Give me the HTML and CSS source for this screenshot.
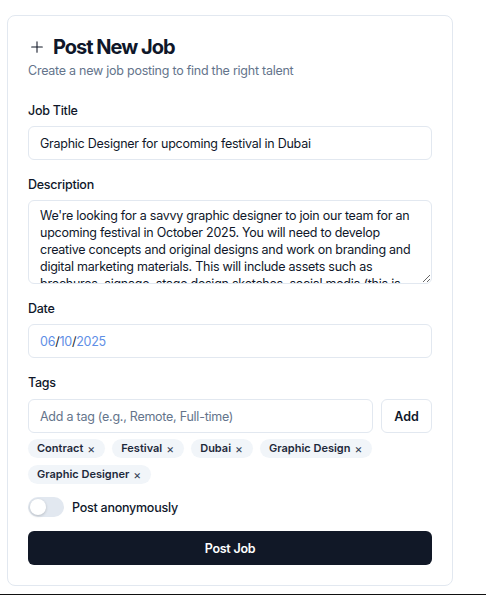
FILE: index.html
```html
<!DOCTYPE html>
<html lang="en">
<head>
<meta charset="utf-8">
<title>Post New Job</title>
<link rel="stylesheet" href="styles.css">
</head>
<body>
<div class="page">
  <div class="card">
    <div class="header">
      <h1 class="title">
        <svg class="plus" width="16" height="16" viewBox="0 0 24 24" fill="none" stroke="currentColor" stroke-width="1.6" stroke-linecap="round"><path d="M12 4v16M4 12h16"/></svg>
        <span>Post New Job</span>
      </h1>
      <p class="subtitle">Create a new job posting to find the right talent</p>
    </div>

    <div class="field">
      <label class="label">Job Title</label>
      <div class="input">Graphic Designer for upcoming festival in Dubai</div>
    </div>

    <div class="field">
      <label class="label">Description</label>
      <textarea class="textarea">We're looking for a savvy graphic designer to join our team for an upcoming festival in October 2025. You will need to develop creative concepts and original designs and work on branding and digital marketing materials. This will include assets such as brochures, signage, stage design sketches, social media (this is not an exhaustive list).</textarea>
    </div>

    <div class="field">
      <label class="label">Date</label>
      <div class="input date"><span class="seg">06</span>/<span class="seg">10</span>/<span class="seg">2025</span></div>
    </div>

    <div class="field tags-field">
      <label class="label">Tags</label>
      <div class="tag-row">
        <div class="input grow placeholder">Add a tag (e.g., Remote, Full-time)</div>
        <button class="add-btn">Add</button>
      </div>
      <div class="chips">
        <span class="chip">Contract <span class="x">×</span></span>
        <span class="chip">Festival <span class="x">×</span></span>
        <span class="chip">Dubai <span class="x">×</span></span>
        <span class="chip">Graphic Design <span class="x">×</span></span>
        <span class="chip">Graphic Designer <span class="x">×</span></span>
      </div>
    </div>

    <div class="toggle-row">
      <span class="switch"><span class="thumb"></span></span>
      <span class="toggle-label">Post anonymously</span>
    </div>

    <button class="submit">Post Job</button>
  </div>
  <div class="rule"></div>
</div>
</body>
</html>
```

FILE: styles.css
```css
* { box-sizing: border-box; }
html, body { margin: 0; padding: 0; background: #fff; }
body {
  font-family: Inter, "Noto Sans", "Liberation Sans", sans-serif;
  color: #0f172a;
  width: 486px;
  height: 595px;
  overflow: hidden;
  letter-spacing: -0.25px;
}
.page { display: flex; flex-direction: column; }
.card {
  margin: 15px 0 0 7px;
  width: 446px;
  border: 1px solid #e2e8f0;
  border-radius: 8px;
  padding: 17px 20px 20px 20px;
  display: flex;
  flex-direction: column;
}
.header { margin-bottom: 22px; }
.title {
  margin: 0;
  display: flex;
  align-items: center;
  gap: 8px;
  font-size: 20px;
  line-height: 28px;
  font-weight: 700;
  letter-spacing: -1px;
  color: #0f172a;
}
.plus { margin-left: 1px; color: #111827; }
.subtitle {
  margin: 1px 0 0;
  font-size: 12.5px;
  line-height: 18px;
  color: #64748b;
}
.field { display: flex; flex-direction: column; margin-bottom: 16px; }
.label {
  font-size: 12.5px;
  line-height: 18px;
  font-weight: 500;
  margin-bottom: 6px;
  color: #0f172a;
}
.tags-field .label { margin-bottom: 7px; }
.input {
  height: 34px;
  border: 1px solid #e2e8f0;
  border-radius: 6px;
  padding: 0 11px;
  display: flex;
  align-items: center;
  font-size: 12.5px;
  color: #0f172a;
}
.grow { flex: 1; }
.textarea {
  display: block;
  height: 84px;
  border: 1px solid #e2e8f0;
  border-radius: 6px;
  padding: 6px 11px;
  font-family: inherit;
  font-size: 12.5px;
  line-height: 17px;
  letter-spacing: -0.25px;
  color: #0f172a;
  overflow: hidden;
  resize: vertical;
  outline: none;
}
.date .seg { color: #5f8fe6; }
.placeholder { color: #64748b; }
.tag-row { display: flex; gap: 8px; }
.add-btn {
  width: 51px;
  height: 34px;
  border: 1px solid #e2e8f0;
  border-radius: 6px;
  background: #fff;
  font-family: inherit;
  font-size: 12.5px;
  font-weight: 600;
  color: #0f172a;
  padding: 0;
}
.chips {
  display: flex;
  flex-wrap: wrap;
  gap: 7px 7px;
  margin-top: 6px;
}
.chip {
  display: inline-flex;
  align-items: center;
  gap: 4px;
  height: 19px;
  line-height: 19px;
  padding: 0 10px 0 9px;
  border-radius: 10px;
  background: #f1f5f9;
  font-size: 11px;
  font-weight: 600;
  color: #1e293b;
  letter-spacing: 0;
}
.x { font-weight: 400; font-size: 12px; color: #334155; }
.toggle-row {
  display: flex;
  align-items: center;
  gap: 8px;
  margin-top: -3px;
  margin-bottom: 14px;
}
.switch {
  width: 36px;
  height: 20px;
  border-radius: 10px;
  background: #e2e8f0;
  display: flex;
  align-items: center;
  padding: 2px;
}
.thumb {
  width: 16px;
  height: 16px;
  border-radius: 50%;
  background: #fff;
  box-shadow: 0 1px 3px rgba(0,0,0,0.2);
}
.toggle-label { font-size: 12.5px; font-weight: 500; }
.submit {
  height: 34px;
  border: none;
  border-radius: 6px;
  background: #111827;
  color: #fff;
  font-family: inherit;
  font-size: 12.5px;
  font-weight: 600;
  letter-spacing: -0.25px;
}
.rule {
  margin-top: 8px;
  height: 2px;
  background: #111;
}
```
